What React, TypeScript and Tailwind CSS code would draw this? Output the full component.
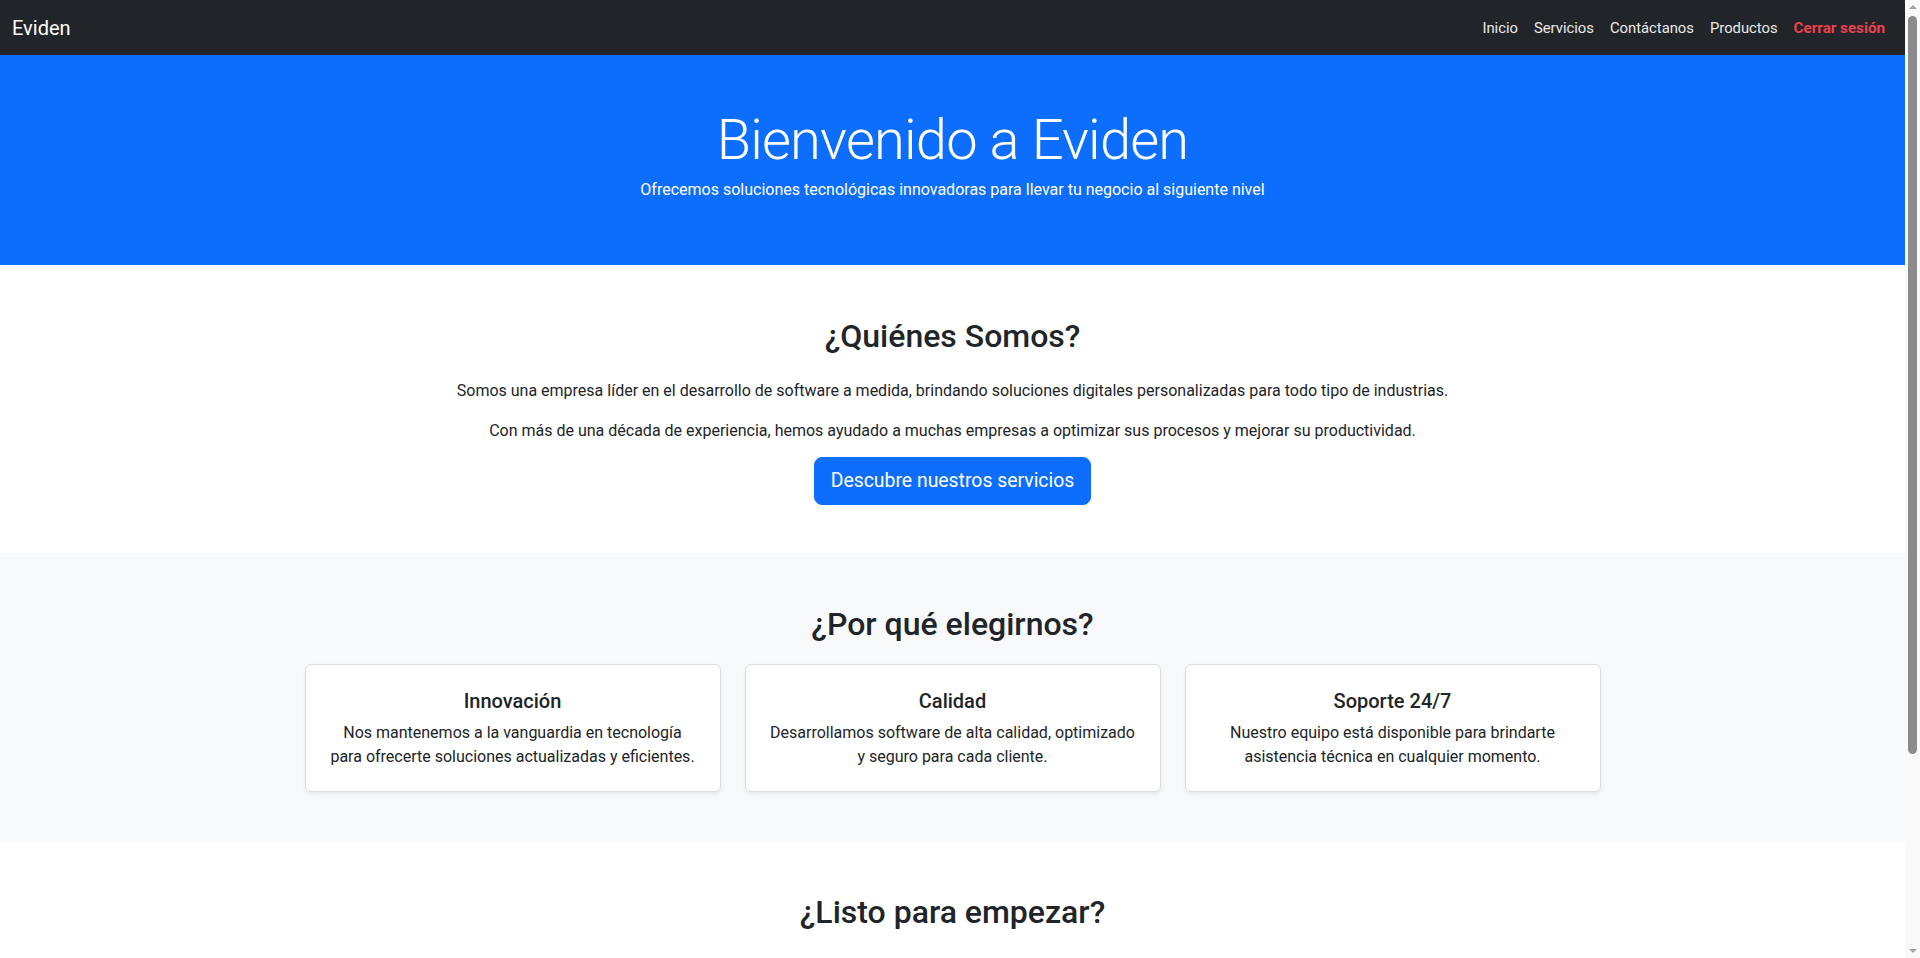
import React from "react";

const navLinks = ["Inicio", "Servicios", "Contáctanos", "Productos"];

const features = [
  {
    title: "Innovación",
    lines: ["Nos mantenemos a la vanguardia en tecnología", "para ofrecerte soluciones actualizadas y eficientes."],
  },
  {
    title: "Calidad",
    lines: ["Desarrollamos software de alta calidad, optimizado", "y seguro para cada cliente."],
  },
  {
    title: "Soporte 24/7",
    lines: ["Nuestro equipo está disponible para brindarte", "asistencia técnica en cualquier momento."],
  },
];

function ScrollTrack() {
  return (
    <aside className="w-[15px] shrink-0 h-screen bg-[#f9f9f9] flex flex-col items-center">
      <div className="mt-[5px] w-0 h-0 border-l-[4px] border-r-[4px] border-b-[4px] border-l-transparent border-r-transparent border-b-[#a3a3a3]" />
      <div className="mt-[7px] w-[9px] h-[738px] rounded-full bg-[#8b8b8b]" />
      <div className="flex-1" />
      <div className="mb-[5px] w-0 h-0 border-l-[4px] border-r-[4px] border-t-[4px] border-l-transparent border-r-transparent border-t-[#a3a3a3]" />
    </aside>
  );
}

export default function App() {
  return (
    <div className="h-screen flex overflow-hidden bg-white text-[#212529] font-['Roboto',sans-serif] text-[16px] leading-6">
      <main className="flex-1 min-w-0 h-screen overflow-hidden">
        {/* Navbar */}
        <nav className="h-[55px] bg-[#212529] px-3 flex items-center justify-between">
          <a className="text-white text-[20px] leading-[30px]">Eviden</a>
          <ul className="flex items-center pt-[1px]">
            {navLinks.map((l) => (
              <li key={l}>
                <a className="block px-2 py-2 text-[14.8px] text-white/90">{l}</a>
              </li>
            ))}
            <li>
              <a className="block px-2 py-2 text-[15.2px] font-bold text-[#ea414e]">Cerrar sesión</a>
            </li>
          </ul>
        </nav>

        {/* Hero */}
        <header className="bg-[#0d6efd] text-white text-center pt-[52px] pb-[63px]">
          <h1 className="text-[56px] font-light leading-[1.2] tracking-[-0.8px]">Bienvenido a Eviden</h1>
          <p className="mt-[4px] text-[16px] leading-6">
            Ofrecemos soluciones tecnológicas innovadoras para llevar tu negocio al siguiente nivel
          </p>
        </header>

        {/* Quiénes somos */}
        <section className="pt-[52px] pb-[48px] text-center">
          <div className="max-w-[1320px] mx-auto px-3">
            <h2 className="text-[32px] font-medium leading-[1.2] mb-[23px]">¿Quiénes Somos?</h2>
            <p className="mb-4">
              Somos una empresa líder en el desarrollo de software a medida, brindando soluciones digitales personalizadas para todo tipo de industrias.
            </p>
            <p className="mb-[14px]">
              Con más de una década de experiencia, hemos ayudado a muchas empresas a optimizar sus procesos y mejorar su productividad.
            </p>
            <button className="bg-[#0d6efd] text-white text-[19.4px] leading-[30px] px-4 py-2 rounded-lg border border-[#0d6efd]">
              Descubre nuestros servicios
            </button>
          </div>
        </section>

        {/* Por qué elegirnos */}
        <section className="bg-[#f8f9fa] pt-[52px] pb-[49px] text-center">
          <div className="max-w-[1320px] mx-auto px-3">
            <h2 className="text-[32px] font-medium leading-[1.2] mb-[21px]">¿Por qué elegirnos?</h2>
            <div className="grid grid-cols-3 gap-6">
              {features.map((f) => (
                <div
                  key={f.title}
                  className="bg-white border border-[#dcdee0] rounded-md shadow-[0_2px_4px_rgba(0,0,0,0.075)] p-6 h-[128px]"
                >
                  <h5 className="text-[20px] font-medium leading-6 mb-2">{f.title}</h5>
                  <p className="whitespace-nowrap">
                    {f.lines[0]}
                    <br />
                    {f.lines[1]}
                  </p>
                </div>
              ))}
            </div>
          </div>
        </section>

        {/* Listo para empezar */}
        <section className="pt-[52px] pb-[47px] text-center">
          <div className="max-w-[1320px] mx-auto px-3">
            <h2 className="text-[32px] font-medium leading-[1.2] mb-[23px]">¿Listo para empezar?</h2>
            <p className="mb-4">
              Contáctanos hoy mismo y descubre cómo nuestras soluciones tecnológicas pueden ayudarte a transformar tu negocio y alcanzar el éxito.
            </p>
            <button className="bg-[#0d6efd] text-white text-[19.4px] leading-[30px] px-4 py-2 rounded-lg border border-[#0d6efd]">
              Contáctanos
            </button>
          </div>
        </section>

        {/* Footer */}
        <footer className="bg-[#212529] text-white text-center py-12">
          <p>© 2024 Eviden. Todos los derechos reservados.</p>
        </footer>
      </main>
      <ScrollTrack />
    </div>
  );
}
